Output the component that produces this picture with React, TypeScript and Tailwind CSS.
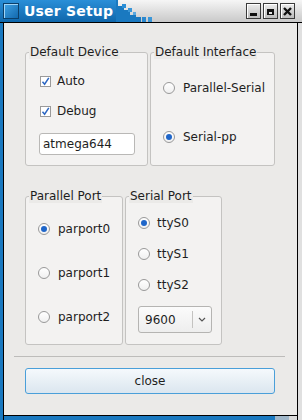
import React from "react";

const font = { fontFamily: '"DejaVu Sans", Verdana, sans-serif' };

function Check({ label }: { label: string }) {
  return (
    <div className="flex h-[20px] items-center">
      <span className="flex h-[11px] w-[11px] items-center justify-center border border-[#9a9a9a] bg-white">
        <svg width="9" height="9" viewBox="0 0 9 9">
          <path d="M1.5 4.8 L3.6 7.2 L7.8 0.8" fill="none" stroke="#2b66c2" strokeWidth="1.5" />
        </svg>
      </span>
      <span className="ml-[6px] text-[12px] text-[#1e1e1e]">{label}</span>
    </div>
  );
}

function Radio({ label, on, gap = "ml-[8px]" }: { label: string; on?: boolean; gap?: string }) {
  return (
    <div className="flex h-[20px] items-center">
      <span className="flex h-[12px] w-[12px] items-center justify-center rounded-full border border-[#999] bg-gradient-to-b from-white to-[#f0f0f0]">
        {on && <span className="h-[6px] w-[6px] rounded-full bg-[#1f66c9]" />}
      </span>
      <span className={`${gap} text-[12px] text-[#1e1e1e]`}>{label}</span>
    </div>
  );
}

function Group({ title, className, children }: { title: string; className: string; children: React.ReactNode }) {
  return (
    <div className={`relative rounded-[3px] border border-[#c4c3c1] bg-[#f3f2f1] ${className}`}>
      {/* caption sits over the top border */}
      <span className="absolute -top-[8px] left-[3px] bg-[#ebeae8] px-[1px] text-[12px] leading-[14px] whitespace-nowrap text-[#1e1e1e]">
        {title}
      </span>
      {children}
    </div>
  );
}

function TitleButton({ kind }: { kind: "min" | "max" | "close" }) {
  return (
    <div className="flex h-[16px] w-[15px] items-center justify-center border border-[#3a3a3a] bg-gradient-to-b from-[#ececec] to-[#bdbdbd] shadow-[inset_1px_1px_0_#fff]">
      <svg width="11" height="11" viewBox="0 0 11 11">
        {kind === "min" && <rect x="2" y="7" width="7" height="3" fill="#111" />}
        {kind === "max" && (
          <>
            <rect x="2" y="3" width="7" height="6" fill="#111" />
            <rect x="4" y="6" width="3" height="2" fill="#e4e4e4" />
          </>
        )}
        {kind === "close" && (
          <path d="M2 2 L9 9 M9 2 L2 9" stroke="#111" strokeWidth="2.4" />
        )}
      </svg>
    </div>
  );
}

export default function App() {
  return (
    <div className="flex h-[420px] w-[302px] flex-col bg-black" style={font}>
      {/* Title bar */}
      <div className="flex h-[22px] items-stretch bg-gradient-to-b from-[#f6f6f6] to-[#c9c9c9]">
        <div className="flex w-[116px] items-center bg-gradient-to-b from-[#2a8fd8] to-[#0f67ab] pl-[3px]">
          <span className="h-[16px] w-[16px] border border-[#0b3f69] bg-gradient-to-br from-[#3fa3e6] to-[#1169ad] shadow-[inset_1px_1px_0_#9fd4f7]" />
          <span className="ml-[5px] text-[14px] font-bold tracking-[0.2px] text-white">User Setup</span>
        </div>
        <svg width="38" height="22" viewBox="0 0 38 22" className="shrink-0">
          <rect x="0" y="0" width="2" height="22" fill="#1a79c0" />
          <rect x="2" y="6" width="6" height="16" fill="#1a79c0" />
          <rect x="6" y="4" width="4" height="4" fill="#2a8ed6" />
          <rect x="8" y="10" width="6" height="12" fill="#1a79c0" />
          <rect x="12" y="8" width="4" height="4" fill="#3a96d8" />
          <rect x="14" y="15" width="6" height="7" fill="#1a79c0" />
          <rect x="17" y="12" width="3" height="3" fill="#5aa8e0" />
          <rect x="20" y="17" width="5" height="5" fill="#1a79c0" />
          <rect x="26" y="17" width="4" height="5" fill="#2a88cf" />
          <rect x="32" y="17" width="4" height="5" fill="#3a96d8" />
        </svg>
        <div className="flex flex-1 items-center justify-end gap-[2px] pr-[7px]">
          <TitleButton kind="min" />
          <TitleButton kind="max" />
          <TitleButton kind="close" />
        </div>
      </div>

      {/* Body */}
      <div className="flex flex-1 border-t border-black">
        <div className="w-[3px] bg-[#1a79c0]" />
        <div className="w-[1px] bg-black" />
        <div className="flex flex-1 flex-col">
          <div className="flex flex-1 flex-col bg-[#ebeae8] pl-[21px]">
            <div className="mt-[29px] flex gap-[2px]">
              <Group title="Default Device" className="h-[114px] w-[123px] pt-[18px] pl-[14px]">
                <div className="flex flex-col gap-[10px]">
                  <Check label="Auto" />
                  <Check label="Debug" />
                </div>
                <div className="-ml-[1px] mt-[12px] flex h-[22px] w-[96px] items-center rounded-[3px] border border-[#b9b8b6] bg-white pl-[3px] text-[12px] text-[#1e1e1e]">
                  atmega644
                </div>
              </Group>
              <Group title="Default Interface" className="h-[114px] w-[125px] pt-[25px] pl-[12px]">
                <Radio label="Parallel-Serial" />
                <div className="mt-[29px]">
                  <Radio label="Serial-pp" on />
                </div>
              </Group>
            </div>

            <div className="mt-[30px] flex gap-[2px]">
              <Group title="Parallel Port" className="h-[149px] w-[98px] pt-[22px] pl-[12px]">
                <div className="flex flex-col gap-[24px]">
                  <Radio label="parport0" on />
                  <Radio label="parport1" />
                  <Radio label="parport2" />
                </div>
              </Group>
              <Group title="Serial Port" className="h-[149px] w-[97px] pt-[16px] pl-[12px]">
                <div className="flex flex-col gap-[11px]">
                  <Radio label="ttyS0" on gap="ml-[7px]" />
                  <Radio label="ttyS1" gap="ml-[7px]" />
                  <Radio label="ttyS2" gap="ml-[7px]" />
                </div>
                <div className="mt-[11px] flex h-[27px] w-[74px] items-center rounded-[3px] border border-[#b5b4b2] bg-gradient-to-b from-[#fbfbfb] to-[#eeeeee] text-[12px] text-[#1e1e1e]">
                  <span className="flex-1 pl-[6px]">9600</span>
                  <span className="h-[17px] w-[1px] bg-[#c4c3c1]" />
                  <svg width="18" height="10" viewBox="0 0 18 10">
                    <path d="M6 3 L9 6 L12 3" fill="none" stroke="#555" strokeWidth="1.2" />
                  </svg>
                </div>
              </Group>
            </div>

            <div className="-ml-[11px] mt-[11px] h-[1px] w-[271px] bg-[#bdbcba]" />

            <button className="mt-[11px] h-[26px] w-[250px] rounded-[3px] border border-[#4a9fd9] bg-gradient-to-b from-[#f5f9fc] to-[#dbe6ef] text-[12px] text-[#1e1e1e]">
              close
            </button>
          </div>
          <div className="h-[1px] bg-black" />
          <div className="flex h-[4px]">
            <div className="flex-1 bg-[#1a79c0]" />
            <div className="w-[14px] bg-[#9fb6c8]" />
            <div className="w-[8px] bg-[#d9d9d9]" />
          </div>
        </div>
        <div className="w-[1px] bg-black" />
        <div className="w-[4px] bg-[#e0e0e0]" />
      </div>
    </div>
  );
}
